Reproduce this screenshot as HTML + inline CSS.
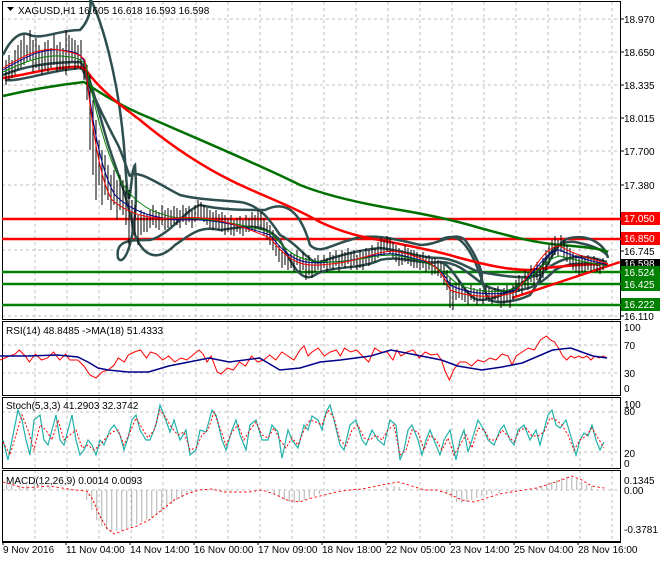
<!DOCTYPE html>
<html><head><style>
body{margin:0;background:#fff;width:660px;height:560px;overflow:hidden;font-family:"Liberation Sans",sans-serif}
svg text{font-family:"Liberation Sans",sans-serif;font-size:10px;fill:#000}
</style></head><body>
<svg width="660" height="560" viewBox="0 0 660 560" xmlns="http://www.w3.org/2000/svg">
<rect width="660" height="560" fill="#fff"/>
<g stroke="#c0c0c0" stroke-dasharray="3,3" stroke-width="1">
<path d="M35 2V541M67 2V541M99 2V541M131 2V541M163 2V541M196 2V541M228 2V541M260 2V541M292 2V541M324 2V541M356 2V541M388 2V541M420 2V541M452 2V541M484 2V541M516 2V541M548 2V541M580 2V541M612 2V541"/>
<path d="M2 19H620M2 52H620M2 85H620M2 118H620M2 151H620M2 185H620M2 250H620M2 316H620"/>
<path d="M2 345H620M2 373H620M2 412H620M2 452H620"/>
<path d="M2 490H620"/>
</g>
<g fill="none" stroke="#000" stroke-width="1">
<rect x="2.5" y="1.5" width="618" height="318"/>
<rect x="2.5" y="321.5" width="618" height="74"/>
<rect x="2.5" y="397.5" width="618" height="71"/>
<rect x="2.5" y="470.5" width="618" height="71"/>
<path d="M2 542.5H621"/>
</g>
<g stroke-width="2.5">
<path d="M2 219H621M2 239H621" stroke="#f00"/>
<path d="M2 272H621M2 284H621M2 305H621" stroke="#008000"/>
</g>
<g fill="none" stroke="#2f4f4f" stroke-width="2.5">
<path d="M3 55C10 40 20 30 30 35S60 30 80 30C90 20 95 0 85 -10C100 10 120 80 125 160S130 170 135 165C140 230 125 270 118 258C115 240 130 240 150 240C170 235 185 210 200 205C220 210 245 210 265 210C285 200 300 210 310 245C320 255 330 245 350 240C370 232 400 240 420 245C440 245 455 230 465 240C480 260 485 280 480 280"/>
<path d="M3 75C15 70 40 62 80 62C90 70 100 120 110 150C120 180 125 190 135 235C145 260 160 260 175 245C190 235 200 225 220 230C240 228 260 220 280 240C290 260 300 285 315 275C330 265 360 270 380 260C400 255 420 265 440 262C455 265 465 300 480 300C500 300 520 285 540 270C550 250 560 240 575 242C590 245 600 248 607 255"/>
<path d="M5 80C20 82 50 70 82 68C95 100 110 130 118 145C125 160 130 180 130 175C140 170 160 185 180 195C200 200 220 200 240 202C260 205 270 220 280 235C300 245 310 265 320 262C340 255 360 250 380 248C400 250 420 258 440 258C460 260 470 270 480 272C500 275 520 280 540 275C550 265 560 260 570 258C580 255 595 258 607 262"/>
<path d="M440 240C455 232 465 240 475 262S485 298 490 300C500 305 520 300 530 295C545 275 555 240 570 238C590 234 605 245 608 258"/>
<path d="M440 262C455 262 465 270 480 282C490 290 510 294 520 290C535 288 545 280 555 270C565 264 580 262 600 265"/>
</g>
<path d="M3 96C20 92 50 86 84 82C110 100 130 110 150 118C200 140 260 165 300 185C330 197 370 205 400 210C430 215 460 222 480 228C510 236 530 242 560 245C590 247 605 250 608 252" fill="none" stroke="#007000" stroke-width="2.5"/>
<path d="M3 78C20 76 40 70 60 68C75 66 82 66 86 70C100 90 120 105 140 120C170 145 200 165 230 180C260 195 290 205 320 222C350 236 370 238 390 242C420 248 440 252 460 258C490 266 510 270 530 270C560 266 590 264 608 264" fill="none" stroke="#f00" stroke-width="2.5"/>
<path d="M512 298L620 262" stroke="#f00" stroke-width="2.5"/>
<g stroke="#000" stroke-width="1">
<path d="M6 60V85M9 55V80M12 60V78M15 50V75M18 45V70M21 40V68M24 35V65M27 45V62M30 30V60M33 40V72M36 38V68M39 45V70M42 50V75M45 42V70M48 40V72M51 48V68M54 35V65M57 45V72M60 42V70M63 48V70M66 30V75M69 35V68M72 38V62M75 40V70M78 45V68M81 40V70M84 60V80M87 65V100M90 75V150M93 100V175M96 120V200M99 140V185M102 150V205M105 155V195M108 165V200M111 175V210M114 170V205M117 180V220M120 175V210M123 180V215M126 185V225M129 190V245M132 200V230M135 205V235M138 215V245M141 210V235M144 212V232M147 215V232M150 210V228M153 205V225M156 210V228M159 212V230M162 205V225M165 210V230M168 208V228M171 210V226M174 206V224M177 208V225M180 210V228M183 205V222M186 208V225M189 206V222M192 210V228M195 205V222M198 200V218M201 202V218M204 205V222M207 208V225M210 210V228M213 212V230M216 210V228M219 214V230M222 212V232M225 215V235M228 218V232M231 215V235M234 220V236M237 218V232M240 216V234M243 220V236M246 215V232M249 218V232M252 212V230M255 215V232M258 210V228M261 212V230M264 218V236M267 222V240M270 225V245M273 230V250M276 240V256M279 245V262M282 250V268M285 252V265M288 255V270M291 252V268M294 255V272M297 250V265M300 258V272M303 252V270M306 258V280M309 255V275M312 260V278M315 258V272M318 255V270M321 260V272M324 255V268M327 258V272M330 252V268M333 255V270M336 250V266M339 255V272M342 250V266M345 252V268M348 248V264M351 252V270M354 250V265M357 255V270M360 250V268M363 252V270M366 248V264M369 250V266M372 245V262M375 248V262M378 242V258M381 238V255M384 240V256M387 236V252M390 238V254M393 242V258M396 245V262M399 248V266M402 250V265M405 245V262M408 248V264M411 250V266M414 250V268M417 252V268M420 255V270M423 252V268M426 256V272M429 255V270M432 258V275M435 258V274M438 260V276M441 262V278M444 265V285M447 270V290M450 278V308M453 285V310M456 282V300M459 280V298M462 285V300M465 288V302M468 290V305M471 285V300M474 288V302M477 290V305M480 288V300M483 290V304M486 285V300M489 288V302M492 290V304M495 288V300M498 286V302M501 290V308M504 288V305M507 285V302M510 290V308M513 285V300M516 280V296M519 275V292M522 278V294M525 270V288M528 272V290M531 265V282M534 268V285M537 262V280M540 265V282M543 258V278M546 250V270M549 245V265M552 240V258M555 236V255M558 240V256M561 235V252M564 240V258M567 245V262M570 248V265M573 252V270M576 255V272M579 258V275M582 255V272M585 258V272M588 255V270M591 258V272M594 256V270M597 258V272M600 260V274M603 258V270"/>
</g>
<path d="M3 70C20 60 40 48 60 50S80 55 85 62C92 120 100 170 115 195C130 210 150 218 180 220C210 218 240 225 270 235C290 260 300 265 330 262C360 262 380 250 400 255C430 262 440 265 450 285C470 295 500 296 515 290C535 275 545 250 560 250C580 260 600 262 607 265" fill="none" stroke="#00008b" stroke-width="1"/>
<path d="M3 72C20 64 40 55 60 56S80 60 86 64C95 110 105 150 120 180C135 205 155 215 180 218C210 218 240 224 270 232C290 255 300 262 330 262C360 262 380 252 400 256C430 262 440 268 455 282C470 292 500 294 515 288C535 278 545 258 560 256C580 262 600 264 607 266" fill="none" stroke="#008000" stroke-width="1"/>
<path d="M3 68C20 58 40 46 60 50S80 55 85 60C92 130 100 180 112 200C130 215 150 220 180 218C210 215 240 225 270 238C290 262 300 268 330 264C360 262 380 248 400 252C430 260 440 266 450 290C470 298 500 298 515 292C535 270 545 245 560 246C580 258 600 260 607 264" fill="none" stroke="#f00" stroke-width="1"/>
<g>
<text x="624" y="23">18.970</text><text x="624" y="56">18.650</text><text x="624" y="89">18.335</text>
<text x="624" y="122">18.015</text><text x="624" y="155">17.700</text><text x="624" y="189">17.380</text>
<text x="624" y="255">16.745</text><text x="624" y="320">16.110</text>
<rect x="621" y="212" width="39" height="13" fill="#f00"/><text x="624" y="222" style="fill:#fff">17.050</text>
<rect x="621" y="232" width="39" height="13" fill="#f00"/><text x="624" y="242" style="fill:#fff">16.850</text>
<rect x="621" y="259" width="39" height="9" fill="#000"/><text x="624" y="267" style="fill:#fff">16.598</text>
<rect x="621" y="266" width="39" height="13" fill="#008000"/><text x="624" y="276" style="fill:#fff">16.524</text>
<rect x="621" y="278" width="39" height="13" fill="#008000"/><text x="624" y="288" style="fill:#fff">16.425</text>
<rect x="621" y="298" width="39" height="13" fill="#008000"/><text x="624" y="308" style="fill:#fff">16.222</text>
</g>
<g stroke="#000"><path d="M621 19h3M621 52h3M621 85h3M621 118h3M621 151h3M621 185h3M621 251h3M621 316h3"/></g>
<path d="M7 7h7l-3.5 4z" fill="#000"/>
<text x="18" y="14">XAGUSD,H1  16.605 16.618 16.593 16.598</text>
<text x="6" y="334">RSI(14) 48.8485  -&gt;MA(18) 51.4333</text>
<text x="624" y="331">100</text><text x="624" y="349">70</text><text x="624" y="377">30</text><text x="624" y="392">0</text>
<g transform="translate(-3,0) scale(1.01,1)">
<path d="M3 360L10 357 18 354 22 350 28 356 32 362 38 354 44 360 50 358 56 352 62 360 68 354 72 360 80 360 86 366 92 375 98 378 104 372 110 370 116 365 120 358 126 362 130 355 136 352 142 350 148 358 152 352 158 354 164 360 170 356 176 362 182 358 188 360 194 355 200 350 204 354 208 362 212 356 218 372 222 374 228 368 234 370 240 362 246 366 252 356 258 362 264 360 270 355 276 360 282 352 288 356 294 360 300 350 304 346 308 356 312 352 318 348 324 356 330 352 336 350 340 356 344 348 350 352 356 350 362 356 368 362 374 348 380 352 386 352 392 360 396 350 400 356 406 352 412 350 418 358 424 352 430 355 436 354 440 360 444 372 448 380 452 370 458 362 464 362 470 366 476 360 482 362 488 358 494 360 500 354 506 356 510 365 514 356 520 352 526 348 532 350 538 340 544 336 548 340 552 342 556 348 560 356 564 360 568 356 572 358 576 356 580 358 584 356 588 360 592 356 596 358 600 356 604 358" fill="none" stroke="#f00" stroke-width="1"/>
<path d="M3 356L30 356 60 355 80 357 90 362 100 368 110 370 130 372 150 372 170 366 190 362 210 358 230 362 260 358 280 370 300 368 320 362 340 360 370 356 390 350 420 356 440 360 456 366 480 370 500 367 520 363 550 350 568 348 590 356 604 358" fill="none" stroke="#00008b" stroke-width="1.5"/>
</g>
<text x="6" y="409">Stoch(5,3,3) 41.2903 32.3742</text>
<text x="624" y="408">100</text><text x="624" y="415">80</text><text x="624" y="457">20</text><text x="624" y="467">0</text>
<path d="M3 440L8 460 14 430 18 410 22 420 26 440 30 455 34 420 40 415 44 440 48 445 52 430 56 415 60 440 64 445 68 430 72 415 76 440 80 455 84 450 88 440 92 445 96 455 100 440 104 445 110 430 114 425 120 435 124 450 128 438 132 420 136 415 140 430 146 440 150 440 156 425 160 405 164 415 170 432 174 420 180 440 186 430 190 455 196 450 200 430 206 432 212 410 216 415 222 440 226 450 232 430 236 420 240 435 246 450 250 425 256 420 262 440 268 440 272 425 278 432 282 458 288 430 292 440 298 448 304 425 308 430 312 416 318 420 322 430 326 412 330 405 334 420 340 445 344 450 350 425 356 420 362 440 366 445 372 430 378 440 384 445 390 420 396 425 400 460 404 450 408 430 412 425 418 440 422 455 426 440 430 430 436 445 440 455 444 440 450 430 456 460 460 440 464 430 468 452 472 440 478 420 484 430 488 440 494 445 500 430 504 425 510 440 514 445 518 430 524 425 530 440 536 430 540 445 544 430 548 415 552 410 556 425 560 428 566 420 572 440 576 455 580 440 584 433 588 436 592 425 596 440 600 450 604 442" fill="none" stroke="#20b2aa" stroke-width="1.2"/>
<path d="M3 442L10 455 16 435 22 415 28 430 34 450 40 425 46 430 52 440 58 420 64 440 70 435 76 430 82 448 88 445 94 450 100 445 106 438 112 432 118 430 124 445 130 432 136 418 142 428 148 438 154 430 160 410 166 418 172 428 178 435 184 432 190 450 196 448 202 435 208 430 214 412 220 428 226 445 232 432 238 425 244 440 250 430 256 422 262 435 268 438 274 428 280 440 286 448 292 438 298 445 304 430 310 420 316 422 322 425 328 410 334 418 340 440 346 446 352 430 358 425 364 438 370 440 376 435 382 440 388 430 394 425 400 455 406 450 412 430 418 432 424 450 430 435 436 440 442 450 448 438 454 455 460 445 466 435 472 448 478 428 484 430 490 440 496 440 502 430 508 436 514 442 520 430 526 428 532 436 538 436 544 432 550 418 556 420 562 425 568 435 574 450 580 440 586 436 592 428 598 438 604 448" fill="none" stroke="#f00" stroke-width="1" stroke-dasharray="2,2"/>
<text x="6" y="484">MACD(12,26,9) 0.0014 0.0093</text>
<text x="624" y="484">0.1345</text><text x="624" y="494">0.00</text><text x="624" y="533">-0.3781</text>
<g transform="translate(-0.75,0) scale(1.25,1)">
<g stroke="#b0b0b0" stroke-width="0.8">
<path d="M6 490V482M10 490V484M16 490V486M22 490V485M28 490V484M34 490V483M40 490V486M70 490V500M74 490V510M78 490V520M82 490V526M86 490V530M90 490V532M94 490V531M98 490V530M102 490V528M106 490V526M110 490V524M114 490V522M118 490V520M122 490V518M126 490V515M130 490V512M134 490V508M138 490V504M142 490V500M146 490V497M150 490V494M154 490V492M220 490V494M224 490V497M228 490V500M232 490V502M236 490V503M240 490V502M244 490V500M248 490V498M252 490V496M256 490V494M300 490V489M310 490V487M316 490V486M320 490V487M358 490V494M362 490V498M366 490V502M370 490V503M374 490V502M378 490V500M382 490V498M386 490V496M390 490V495M394 490V494M400 490V493M410 490V492M430 490V488M434 490V486M438 490V484M442 490V482M446 490V480M450 490V478M454 490V477M458 490V477M462 490V479M466 490V482M470 490V484M474 490V486"/>
</g>
<path d="M3 482L20 488 40 486 60 490 70 491 75 500 80 515 86 528 92 534 100 530 110 526 120 520 130 510 140 500 150 494 160 490 170 489 180 492 200 492 210 490 220 494 230 500 240 502 250 498 260 495 270 492 280 490 290 489 310 484 320 482 330 486 340 490 350 490 360 494 370 500 380 502 390 498 400 494 410 492 420 490 430 488 440 484 450 480 458 476 466 480 474 486 484 488" fill="none" stroke="#f00" stroke-width="0.9" stroke-dasharray="2,2"/>
</g>
<g stroke="#000"><path d="M3 542v3M66 542v3M130 542v3M194 542v3M258 542v3M322 542v3M386 542v3M450 542v3M514 542v3M578 542v3"/></g>
<text x="3" y="553">9 Nov 2016</text><text x="66" y="553">11 Nov 04:00</text><text x="130" y="553">14 Nov 14:00</text>
<text x="194" y="553">16 Nov 00:00</text><text x="258" y="553">17 Nov 09:00</text><text x="322" y="553">18 Nov 18:00</text>
<text x="386" y="553">22 Nov 05:00</text><text x="450" y="553">23 Nov 14:00</text><text x="514" y="553">25 Nov 04:00</text>
<text x="578" y="553">28 Nov 16:00</text>
</svg>
</body></html>
